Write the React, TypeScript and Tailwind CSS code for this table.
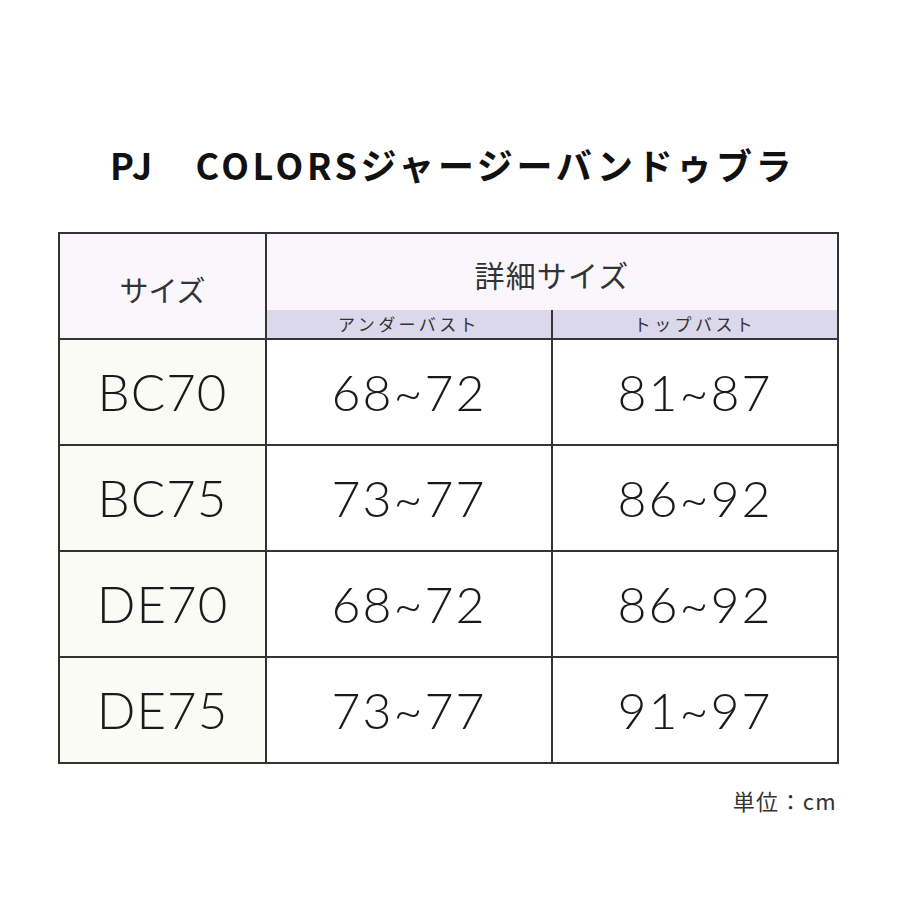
const rows = [
  { size: "BC70", under: "68~72", top: "81~87" },
  { size: "BC75", under: "73~77", top: "86~92" },
  { size: "DE70", under: "68~72", top: "86~92" },
  { size: "DE75", under: "73~77", top: "91~97" },
];

const jp = { fontFamily: '"Noto Sans CJK JP", "Noto Sans", sans-serif' };
const num = { fontFamily: 'Lato, "Noto Sans", sans-serif' };

export default function App() {
  return (
    <div className="w-[900px] h-[900px] bg-white text-[#222]">
      <div className="pt-[139px] pl-[110px]">
        <h1 className="text-[36px] leading-[50px] font-bold tracking-[0.1em] text-[#111] whitespace-nowrap" style={jp}>
          PJ　COLORSジャージーバンドゥブラ
        </h1>
      </div>

      <div className="ml-[58px] mt-[43px] w-[779px]">
        <table className="border-collapse w-full table-fixed">
          <colgroup>
            <col className="w-[207px]" />
            <col className="w-[286px]" />
            <col className="w-[286px]" />
          </colgroup>
          <thead>
            <tr className="h-[77px]">
              <th
                rowSpan={2}
                className="border-2 border-[#333] bg-[#f9f7fb] font-normal text-[29px] text-[#333] pt-[8px]"
                style={jp}
              >
                サイズ
              </th>
              <th
                colSpan={2}
                className="border-2 border-b-0 border-[#333] bg-[#f9f7fb] font-normal text-[30px] tracking-[0.04em] text-[#333] pt-[4px]"
                style={jp}
              >
                詳細サイズ
              </th>
            </tr>
            <tr className="h-[28px]">
              <th className="border-2 border-t-0 border-r-0 border-[#333] bg-[#dcd8ec] font-normal text-[17px] tracking-[0.2em] text-[#333] leading-[28px]" style={jp}>
                アンダーバスト
              </th>
              <th className="border-2 border-t-0 border-[#333] bg-[#dcd8ec] font-normal text-[17px] tracking-[0.2em] text-[#333] leading-[28px]" style={jp}>
                トップバスト
              </th>
            </tr>
          </thead>
          <tbody>
            {rows.map((r) => (
              <tr key={r.size} className="h-[106px]">
                <td className="border-2 border-[#333] bg-[#fbfbf5] text-center text-[51px] font-light tracking-[0.02em] text-[#1a1a1a]" style={num}>
                  {r.size}
                </td>
                <td className="border-2 border-[#333] bg-white text-center text-[50px] font-light tracking-[0.04em] text-[#1a1a1a]" style={num}>
                  {r.under}
                </td>
                <td className="border-2 border-[#333] bg-white text-center text-[50px] font-light tracking-[0.04em] text-[#1a1a1a]" style={num}>
                  {r.top}
                </td>
              </tr>
            ))}
          </tbody>
        </table>
        <div className="flex justify-end mt-[20px]">
          <span className="text-[22px] text-[#333] tracking-[0.06em]" style={jp}>
            単位：cm
          </span>
        </div>
      </div>
    </div>
  );
}
